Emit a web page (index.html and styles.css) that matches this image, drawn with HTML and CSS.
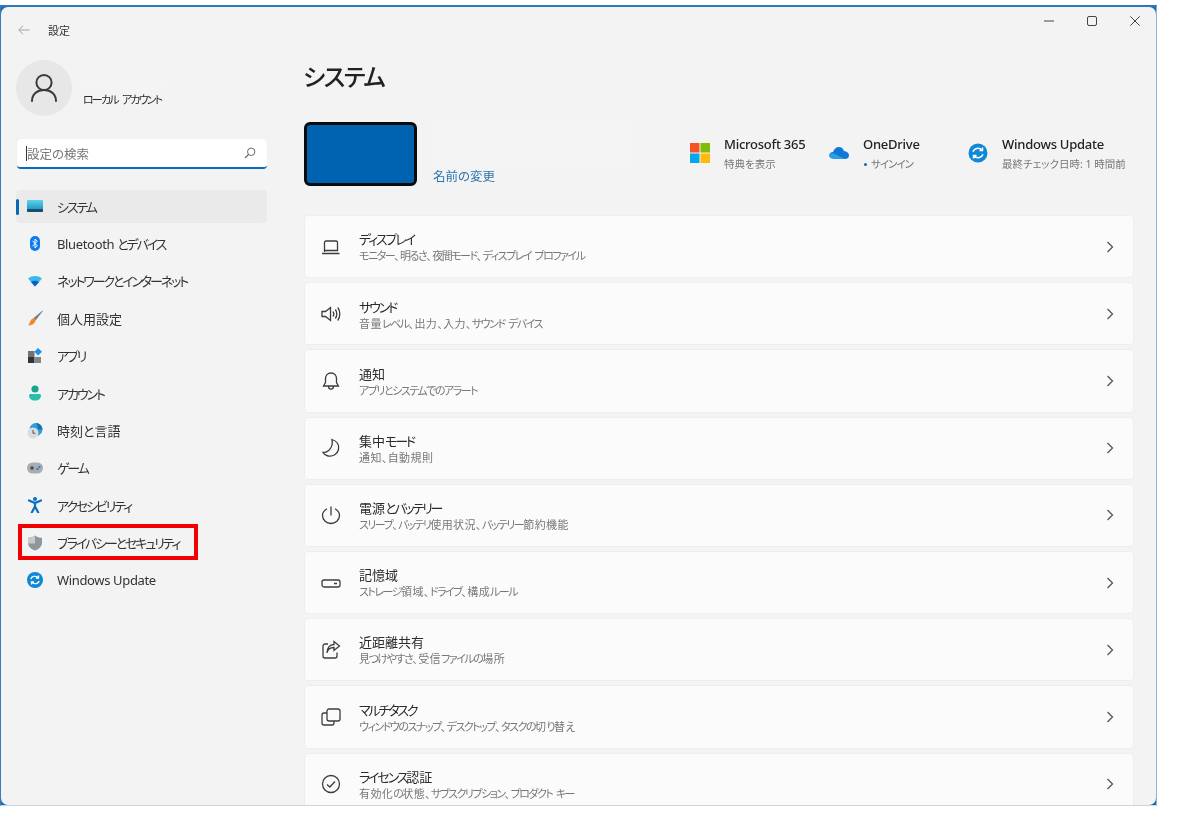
FILE: index.html
```html
<!DOCTYPE html>
<html lang="ja">
<head>
<meta charset="utf-8">
<title>設定</title>
<link rel="stylesheet" href="styles.css">
</head>
<body>
<div class="window">
  <div class="inner">
    <aside class="sidebar">
      <div class="titlebar">
        <svg class="back" viewBox="0 0 12 10" width="12" height="10"><path d="M11.5 5H1M5 .7 .8 5 5 9.3" fill="none" stroke="#a3a3a3" stroke-width="1"/></svg>
        <span class="app-name">設定</span>
      </div>
      <div class="profile">
        <div class="avatar">
          <svg viewBox="0 0 28 30" width="28" height="30"><circle cx="14" cy="9.5" r="7.6" fill="none" stroke="#3a3a3a" stroke-width="2"/><path d="M2 28c0-6.5 5-11 12-11s12 4.500 12 11" fill="none" stroke="#3a3a3a" stroke-width="2" stroke-linecap="round"/></svg>
        </div>
        <div class="profile-text">
          <div class="redact-name"></div>
          <div class="account k">ローカル アカウント</div>
        </div>
      </div>
      <div class="search">
        <span class="caret"></span>
        <span class="placeholder">設定の検索</span>
        <svg viewBox="0 0 12 12" width="12" height="12"><circle cx="7.200" cy="4.800" r="3.700" fill="none" stroke="#666" stroke-width="1"/><path d="M4.500 7.500 1 11" stroke="#666" stroke-width="1.100"/></svg>
      </div>
      <nav class="nav">
        <a class="nav-item selected">
          <svg viewBox="0 0 16 12" width="16" height="12"><defs><linearGradient id="sys" x1="0" y1="0" x2="0" y2="1"><stop offset="0" stop-color="#59d6ea"/><stop offset="1" stop-color="#1a86b8"/></linearGradient></defs><rect width="16" height="12" rx="1" fill="url(#sys)"/><rect y="9" width="16" height="3" rx="1" fill="#17506f"/></svg>
          <span class="label k">システム</span>
        </a>
        <a class="nav-item">
          <svg viewBox="0 0 16 16" width="16" height="16"><rect x="3" y="0" width="10" height="15" rx="5" fill="#0a7cf0"/><path d="M5.500 4.800 10.300 9.800 8 12V3L10.300 5.200 5.500 10.200" fill="none" stroke="#fff" stroke-width="1"/></svg>
          <span class="label"><span class="l">Bluetooth </span><span class="k">とデバイス</span></span>
        </a>
        <a class="nav-item">
          <svg viewBox="0 0 16 12" width="16" height="12"><path d="M1 3.500C5 .2 11 .2 15 3.500L8 11.500Z" fill="#35b9ee"/><path d="M4 6.900C6.400 5.200 9.600 5.200 12 6.900L8 11.500Z" fill="#0a5fc4"/></svg>
          <span class="label k">ネットワークとインターネット</span>
        </a>
        <a class="nav-item">
          <svg viewBox="0 0 16 16" width="16" height="16"><path d="M15.500 .5 6.300 8.300 8.500 10.500 15.500 1.500Z" fill="#7b7d80"/><path d="M6 8.300 8.600 10.800C8 13.800 4.500 15.500 1 15.500 3 13.800 2.800 10 6 8.300Z" fill="#ee8a2c"/></svg>
          <span class="label">個人用設定</span>
        </a>
        <a class="nav-item">
          <svg viewBox="0 0 16 16" width="16" height="16"><rect x="1" y="3" width="6.500" height="6" fill="#6d7378"/><rect x="1" y="9" width="6.500" height="6" fill="#2f3336"/><rect x="7.500" y="9" width="6.500" height="6" fill="#7f8589"/><path d="M11 0 15 3.800 11 7.600 7.500 3.800Z" fill="#1f8fe8"/></svg>
          <span class="label k">アプリ</span>
        </a>
        <a class="nav-item">
          <svg viewBox="0 0 16 16" width="16" height="16"><circle cx="8" cy="4" r="3.600" fill="#1aa391"/><path d="M2 10.500C2 9.500 3 9 4 9H12C13 9 14 9.500 14 10.500 14 13.500 11.500 15.500 8 15.500S2 13.500 2 10.500Z" fill="#27bfa8"/></svg>
          <span class="label k">アカウント</span>
        </a>
        <a class="nav-item">
          <svg viewBox="0 0 16 16" width="16" height="16"><circle cx="9" cy="6.500" r="6.500" fill="#2a9fd6"/><path d="M9 0a6.500 6.500 0 0 1 6.500 6.500H11C11 3.500 10 1.500 9 0Z" fill="#1b6fb8"/><circle cx="6" cy="10" r="5.500" fill="#d9dde0"/><path d="M6 7v3.300H8.300" fill="none" stroke="#4d5358" stroke-width="1"/></svg>
          <span class="label">時刻と言語</span>
        </a>
        <a class="nav-item">
          <svg viewBox="0 0 16 12" width="16" height="12"><rect x="0" y=".5" width="16" height="11" rx="5.500" fill="#a9adb1"/><path d="M3 6H7M5 4V8" stroke="#2d3134" stroke-width="1"/><circle cx="10.500" cy="7" r="1.100" fill="#1a78c8"/><circle cx="12.500" cy="5" r="1.100" fill="#1a78c8"/></svg>
          <span class="label k">ゲーム</span>
        </a>
        <a class="nav-item">
          <svg viewBox="0 0 14 16" width="14" height="16"><circle cx="7" cy="2" r="2" fill="#0a6fc2"/><path d="M1 3.500 7 6 13 3.500M7 6V9.500M7 9.500 3.800 15.500M7 9.500 10.200 15.500" fill="none" stroke="#0a6fc2" stroke-width="2.200" stroke-linecap="round"/></svg>
          <span class="label k">アクセシビリティ</span>
        </a>
        <a class="nav-item highlight">
          <svg viewBox="0 0 16 16" width="16" height="16"><path d="M8 .5C10 2 12.500 2.800 15 2.800V7.500C15 11.500 12 14.200 8 15.500 4 14.200 1 11.500 1 7.500V2.800C3.500 2.800 6 2 8 .5Z" fill="#8f979d"/><path d="M8 .5C6 2 3.500 2.800 1 2.800V7.500C1 8 1 8.300 1.100 8.500H8Z" fill="#c5cacd"/></svg>
          <span class="label k">プライバシーとセキュリティ</span>
        </a>
        <a class="nav-item">
          <svg viewBox="0 0 16 16" width="16" height="16"><circle cx="8" cy="8" r="8" fill="#0f88d8"/><path d="M3.800 7C4.500 4.500 8.500 3.200 11 5.500M11.500 3.500V6H9M12.200 9C11.500 11.500 7.500 12.800 5 10.500M4.500 12.500V10H7" fill="none" stroke="#fff" stroke-width="1.300"/></svg>
          <span class="label l">Windows Update</span>
        </a>
      </nav>
    </aside>

    <main class="main">
      <div class="controls">
        <svg viewBox="0 0 10 10" width="10" height="10"><path d="M0 5H10" stroke="#444" stroke-width="1"/></svg>
        <svg viewBox="0 0 10 10" width="10" height="10"><rect x=".5" y=".5" width="9" height="9" rx="1.500" fill="none" stroke="#444" stroke-width="1"/></svg>
        <svg viewBox="0 0 10 10" width="10" height="10"><path d="M.3 .3 9.700 9.700M9.700 .3 .3 9.700" stroke="#444" stroke-width="1"/></svg>
      </div>
      <h1 class="title">システム</h1>
      <section class="device-row">
        <div class="device"></div>
        <div class="device-name">
          <div class="redact-device"></div>
          <a class="rename">名前の変更</a>
        </div>
        <div class="quick">
          <div class="quick-item">
            <svg viewBox="0 0 20 20" width="20" height="20"><rect width="9.500" height="9.500" fill="#f35325"/><rect x="10.500" width="9.500" height="9.500" fill="#81bc06"/><rect y="10.500" width="9.500" height="9.500" fill="#05a6f0"/><rect x="10.500" y="10.500" width="9.500" height="9.500" fill="#ffba08"/></svg>
            <div><div class="quick-title">Microsoft 365</div><div class="quick-sub">特典を表示</div></div>
          </div>
          <div class="quick-item">
            <svg viewBox="0 0 20 14" width="20" height="14"><path d="M5 12.500C1.500 12.500 0 11 .3 9 .6 7 2.200 6 4 6 5 3 7 1 10 1 12.500 1 14 2.500 15 5 18 5.200 20 7 20 9.500 20 11.500 18.500 13 16 13H5Z" fill="#0f78d4"/><path d="M.4 9.300C1 7.800 3 7 5 7.500L16 13H5C1.500 13 .2 11 .4 9.300Z" fill="#2a9fe8"/></svg>
            <div><div class="quick-title">OneDrive</div><div class="quick-sub signin"><i class="dot"></i><span class="k">サインイン</span></div></div>
          </div>
          <div class="quick-item">
            <svg viewBox="0 0 20 20" width="20" height="20"><circle cx="10" cy="10" r="9.500" fill="#0f88d8"/><path d="M5 8.700C6 5.500 10.800 4 14 7M14.500 4.500V7.500H11.500M15 11.300C14 14.500 9.200 16 6 13M5.500 15.500V12.500H8.500" fill="none" stroke="#fff" stroke-width="1.500"/></svg>
            <div><div class="quick-title">Windows Update</div><div class="quick-sub">最終チェック日時: 1 時間前</div></div>
          </div>
        </div>
      </section>
      <section class="cards">
        <a class="card">
          <svg class="ico" viewBox="0 0 20 20" width="20" height="20"><path d="M4.500 15V5.500A1.500 1.500 0 0 1 6 4H16A1.500 1.500 0 0 1 17.500 5.500V13.500H4.500M2 16.500H19.500" transform="translate(-1 0)" /></svg>
          <div class="card-text"><div class="card-title k">ディスプレイ</div><div class="card-sub"><span class="k">モニター</span>、<span class="k">明るさ</span>、<span class="k">夜間モード</span>、<span class="k">ディスプレイ プロファイル</span></div></div>
          <svg class="chev" viewBox="0 0 8 12" width="8" height="12"><path d="M1.500 1 6.500 6 1.500 11"/></svg>
        </a>
        <a class="card">
          <svg class="ico" viewBox="0 0 20 20" width="20" height="20"><path d="M1 7.500H4.500L9.500 3.500V16.500L4.500 12.500H1ZM12 7.500C13 9 13 11 12 12.500M14.300 5.500C16.300 8 16.300 12 14.300 14.500M16.700 3.500C19.500 7 19.500 13 16.700 16.500"/></svg>
          <div class="card-text"><div class="card-title k">サウンド</div><div class="card-sub">音量<span class="k">レベル</span>、出力、入力、<span class="k">サウンド デバイス</span></div></div>
          <svg class="chev" viewBox="0 0 8 12" width="8" height="12"><path d="M1.500 1 6.500 6 1.500 11"/></svg>
        </a>
        <a class="card">
          <svg class="ico" viewBox="0 0 20 20" width="20" height="20"><path d="M10 2C6.500 2 4.500 4.500 4.500 7.500V11.500L2.500 15H17.500L15.500 11.500V7.500C15.500 4.500 13.500 2 10 2ZM7.500 15.500C7.700 19 12.300 19 12.500 15.500"/></svg>
          <div class="card-text"><div class="card-title">通知</div><div class="card-sub k">アプリとシステムでのアラート</div></div>
          <svg class="chev" viewBox="0 0 8 12" width="8" height="12"><path d="M1.500 1 6.500 6 1.500 11"/></svg>
        </a>
        <a class="card">
          <svg class="ico" viewBox="0 0 20 20" width="20" height="20"><path d="M11 1.500C16 3 18.500 7 17.500 11.500 16.500 16 12 19 7 18 4.500 17.500 2.800 16 2 14.500 7.500 14.500 12.500 9 11 1.500Z"/></svg>
          <div class="card-text"><div class="card-title">集中<span class="k">モード</span></div><div class="card-sub">通知、自動規則</div></div>
          <svg class="chev" viewBox="0 0 8 12" width="8" height="12"><path d="M1.500 1 6.500 6 1.500 11"/></svg>
        </a>
        <a class="card">
          <svg class="ico" viewBox="0 0 20 20" width="20" height="20"><path d="M10 1.500V10.500M6 3.800C3.500 5.200 1.500 7.500 1.500 10.500 1.500 15 5.500 18.500 10 18.500S18.500 15 18.500 10.500C18.500 7.500 16.500 5.200 14 3.800"/></svg>
          <div class="card-text"><div class="card-title">電源<span class="k">とバッテリー</span></div><div class="card-sub"><span class="k">スリープ</span>、<span class="k">バッテリ</span>使用状況、<span class="k">バッテリー</span>節約機能</div></div>
          <svg class="chev" viewBox="0 0 8 12" width="8" height="12"><path d="M1.500 1 6.500 6 1.500 11"/></svg>
        </a>
        <a class="card">
          <svg class="ico" viewBox="0 0 20 20" width="20" height="20"><rect x="1" y="7" width="18" height="7" rx="2"/><path d="M13 10.500H16"/></svg>
          <div class="card-text"><div class="card-title">記憶域</div><div class="card-sub"><span class="k">ストレージ</span>領域、<span class="k">ドライブ</span>、構成<span class="k">ルール</span></div></div>
          <svg class="chev" viewBox="0 0 8 12" width="8" height="12"><path d="M1.500 1 6.500 6 1.500 11"/></svg>
        </a>
        <a class="card">
          <svg class="ico" viewBox="0 0 20 20" width="20" height="20"><path d="M7 4H4A2 2 0 0 0 2 6V16A2 2 0 0 0 4 18H14A2 2 0 0 0 16 16V12.500M6 13C6.500 9.500 9 7.500 13 7.500V10.500L18.500 6 13 1.500V4.500C8.500 4.500 6 8 6 13Z"/></svg>
          <div class="card-text"><div class="card-title">近距離共有</div><div class="card-sub"><span class="k">見つけやすさ</span>、受信<span class="k">ファイルの</span>場所</div></div>
          <svg class="chev" viewBox="0 0 8 12" width="8" height="12"><path d="M1.500 1 6.500 6 1.500 11"/></svg>
        </a>
        <a class="card">
          <svg class="ico" viewBox="0 0 20 20" width="20" height="20"><rect x="6" y="2" width="13" height="12" rx="2"/><path d="M6 6H3A2 2 0 0 0 1 8V16A2 2 0 0 0 3 18H11A2 2 0 0 0 13 16V14"/></svg>
          <div class="card-text"><div class="card-title k">マルチタスク</div><div class="card-sub"><span class="k">ウィンドウのスナップ</span>、<span class="k">デスクトップ</span>、<span class="k">タスクの</span>切<span class="k">り</span>替<span class="k">え</span></div></div>
          <svg class="chev" viewBox="0 0 8 12" width="8" height="12"><path d="M1.500 1 6.500 6 1.500 11"/></svg>
        </a>
        <a class="card">
          <svg class="ico" viewBox="0 0 20 20" width="20" height="20"><circle cx="10" cy="10" r="8.500"/><path d="M6 10.500 8.800 13 14 7.500"/></svg>
          <div class="card-text"><div class="card-title"><span class="k">ライセンス</span>認証</div><div class="card-sub">有効化<span class="k">の</span>状態、<span class="k">サブスクリプション</span>、<span class="k">プロダクト キー</span></div></div>
          <svg class="chev" viewBox="0 0 8 12" width="8" height="12"><path d="M1.500 1 6.500 6 1.500 11"/></svg>
        </a>
      </section>
    </main>
  </div>
</div>
</body>
</html>
```
FILE: styles.css
```css
*, *::before, *::after { box-sizing: border-box; }
html, body { margin: 0; height: 100%; background: #fff; overflow: hidden; }
body {
  font-family: "Noto Sans", "Noto Sans CJK JP", sans-serif;
  font-feature-settings: "palt";
  color: #2b2b2b;
}
a { color: inherit; text-decoration: none; }
.k { letter-spacing: -.165em; word-spacing: 3px; }
.l { letter-spacing: -.35px; }

.window {
  width: 1157px;
  height: 801px;
  margin-top: 5px;
  background: #1a6db5;
  border-top: 2px solid #2e78b8;
  border-left: 1px solid #3a7cb5;
  border-right: 1px solid #8db4d4;
  border-bottom: 1px solid #c9d5df;
}
.inner {
  height: 100%;
  display: flex;
  background: #f3f3f3;
  border-radius: 7px;
  overflow: hidden;
  filter: blur(.4px);
}

.sidebar { width: 282px; flex: none; padding-left: 15px; }
.titlebar { height: 45px; display: flex; align-items: center; padding: 0 0 0 2px; }
.app-name { margin-left: 18px; font-size: 11px; color: #333; }
.profile { height: 56px; margin-top: 8px; display: flex; align-items: center; }
.avatar {
  width: 56px; height: 56px; border-radius: 50%;
  background: #e7e7e7;
  display: flex; align-items: center; justify-content: center;
}
.profile-text { margin-left: 11px; margin-top: 8px; }
.redact-name { width: 84px; height: 14px; background: #f4f4f4; }
.account { font-size: 11px; line-height: 17px; color: #2b2b2b; }

.search {
  width: 250px; height: 30px; margin: 23px 0 0 1px;
  display: flex; align-items: center;
  padding: 0 11px 0 9px;
  background: #fff;
  border-radius: 4px;
  border-bottom: 2px solid #0a6cb8;
  box-shadow: 0 0 1px #d5d5d5;
}
.caret { width: 1px; height: 15px; background: #333; }
.placeholder { flex: 1; font-size: 12.500px; color: #777; }

.nav { width: 251px; margin-top: 20.500px; display: flex; flex-direction: column; gap: 4px; }
.nav-item {
  position: relative;
  height: 33.400px;
  display: flex; align-items: center;
  padding-left: 11px;
  border-radius: 4px;
  font-size: 13px;
  color: #333;
}
.nav-item svg { width: 16px; flex: none; }
.label { margin-left: 14px; }
.selected { background: #eaeaea; }
.selected::before {
  content: "";
  position: absolute; left: 0; top: 9px;
  width: 2.500px; height: 16px;
  background: #0a67b4; border-radius: 2px;
}
.highlight::after {
  content: "";
  position: absolute; left: 2px; top: -2px;
  width: 180px; height: 36px;
  border: 4px solid #f00000;
}

.main { flex: 1; padding: 0 22px 0 21px; min-width: 0; }
.controls {
  height: 28px; display: flex; align-items: center; justify-content: flex-end;
  gap: 33px; margin-right: -6px;
}
.title { margin: 26px 0 0 -1px; font-size: 24px; line-height: 32px; font-weight: 500; letter-spacing: -1.500px; color: #222; }
.device-row { margin-top: 29px; height: 64px; display: flex; }
.device {
  width: 113px; height: 64px; flex: none;
  background: #0063b1;
  border: 3px solid #0a0a0a;
  border-radius: 6px;
}
.device-name { flex: 1; margin-left: 13px; display: flex; flex-direction: column; justify-content: flex-end; }
.redact-device { width: 205px; height: 43px; background: #f4f4f4; }
.rename { padding: 2px 0 0 3px; font-size: 12.500px; line-height: 19px; color: #2a76b3; }
.quick { width: 444px; flex: none; display: grid; grid-template-columns: 139px 139px 166px; margin-top: 13px; align-self: flex-start; }
.quick-item { display: flex; align-items: center; }
.quick-item svg { width: 20px; flex: none; margin: -3px 14px 0 0; }
.quick-title { font-size: 13px; line-height: 19px; margin-bottom: 1px; font-weight: 500; letter-spacing: -.25px; color: #222; }
.quick-sub { font-size: 10.500px; line-height: 19px; color: #777; }
.quick-sub .k { letter-spacing: -.1em; }
.signin { display: flex; align-items: center; }
.dot { width: 3px; height: 3px; margin: 0 4px 0 1px; border-radius: 50%; background: #0a6cb8; }

.cards { margin-top: 29px; display: flex; flex-direction: column; gap: 4px; }
.card {
  height: 63.200px; flex: none;
  display: flex; align-items: center;
  padding: 0 19px 0 16px;
  background: #fbfbfb;
  border: 1px solid #eeeeee;
  border-radius: 4px;
}
.ico { flex: none; fill: none; stroke: #3c3c3c; stroke-width: 1.300; }
.card-text { flex: 1; margin-left: 18px; padding-top: 2.500px; }
.card-title { font-size: 13px; line-height: 16px; margin-bottom: 1px; color: #2b2b2b; }
.card-sub { font-size: 11px; line-height: 16px; letter-spacing: .4px; color: #777; }
.card-sub .k, .card-sub.k { letter-spacing: -.135em; word-spacing: 2px; }
.chev { flex: none; fill: none; stroke: #555; stroke-width: 1.300; }
```
